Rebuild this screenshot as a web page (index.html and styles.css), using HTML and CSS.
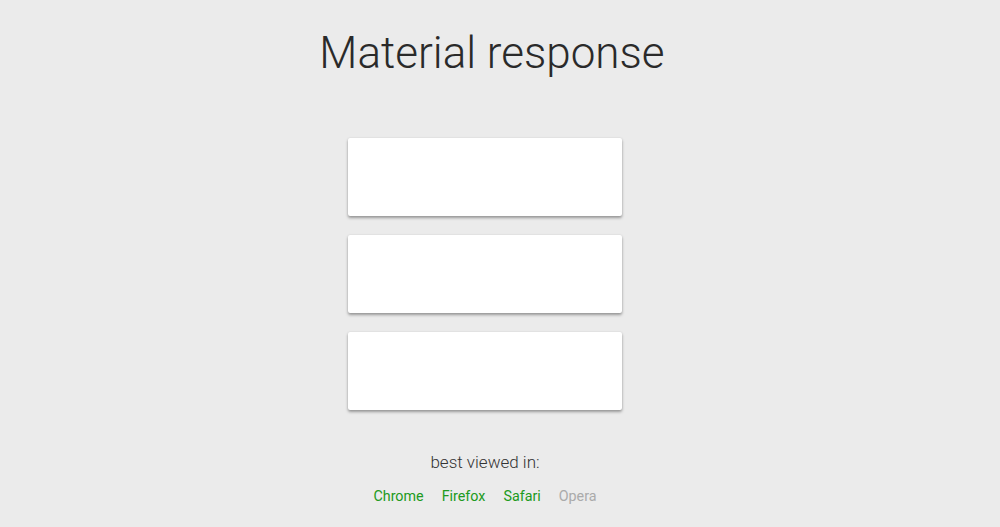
FILE: index.html
```html
<!DOCTYPE html>
<html>
<head>
<meta charset="utf-8">
<link rel="stylesheet" href="styles.css">
</head>
<body>
<div class="page">
  <h1 class="title">Material response</h1>
  <div class="cards">
    <div class="card"></div>
    <div class="card"></div>
    <div class="card"></div>
  </div>
  <div class="footer">
    <p class="best">best viewed in:</p>
    <div class="browsers">
      <a class="browser ok">Chrome</a>
      <a class="browser ok">Firefox</a>
      <a class="browser ok">Safari</a>
      <a class="browser off">Opera</a>
    </div>
  </div>
</div>
</body>
</html>
```
FILE: styles.css
```css
html, body {
  margin: 0;
  padding: 0;
  background: #ebebeb;
  font-family: Roboto, "Liberation Sans", sans-serif;
}
.page {
  width: 1000px;
  height: 527px;
  display: flex;
  flex-direction: column;
  align-items: center;
}
.title {
  margin: 26px 0 0 0;
  padding-right: 16px;
  width: 1000px;
  box-sizing: border-box;
  text-align: center;
  font-weight: 300;
  font-size: 44px;
  line-height: 54px;
  color: #2a2a2a;
}
.cards {
  margin-top: 58px;
  margin-right: 30px;
  display: flex;
  flex-direction: column;
  gap: 19px;
}
.card {
  width: 274px;
  height: 78px;
  background: #fff;
  border-radius: 2px;
  box-shadow: 0 2px 3px rgba(0,0,0,0.35), 0 0 2px rgba(0,0,0,0.1);
}
.footer {
  margin-top: 40px;
  margin-right: 30px;
  display: flex;
  flex-direction: column;
  align-items: center;
}
.best {
  margin: 0;
  font-weight: 300;
  font-size: 17px;
  line-height: 24px;
  color: #333;
}
.browsers {
  margin-top: 12px;
  display: flex;
  gap: 18px;
}
.browser {
  font-size: 14.3px;
  line-height: 20px;
  text-decoration: none;
}
.ok { color: #209a20; }
.off { color: #aaa; }
```
